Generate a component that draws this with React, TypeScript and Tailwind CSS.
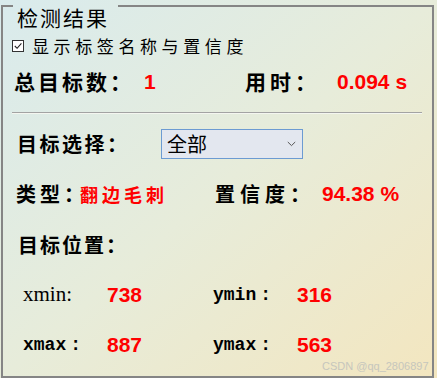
export default function App() {
  return (
    <div className="relative w-[437px] h-[378px] overflow-hidden bg-gradient-to-br from-[#d9ebed] via-[#e7ecda] to-[#f3e6bf] text-black font-['Noto_Sans_CJK_SC',sans-serif]">
      <fieldset className="ml-[1px] w-[433px] h-[378px] border-2 border-[#858585]">
        <legend className="ml-[10px] h-[12px] pl-[4px] pr-[9px]">
          <span className="block mt-[5px] text-[21px] leading-[24px] tracking-[2px] whitespace-nowrap">检测结果</span>
        </legend>

        {/* checkbox */}
        <div className="mt-[22px] h-[24px] flex items-center pl-[9px]">
          <span className="w-[12px] h-[12px] border border-[#333] bg-white flex items-center justify-center">
            <svg width="10" height="10" viewBox="0 0 10 10">
              <path d="M1.8 5 L4.1 7.3 L8.4 2.4" fill="none" stroke="#222" strokeWidth="1.1" />
            </svg>
          </span>
          <span className="ml-[8px] text-[17px] leading-[24px] tracking-[4.6px] whitespace-nowrap">显示标签名称与置信度</span>
        </div>

        {/* totals */}
        <div className="mt-[9px] h-[30px] flex items-center pl-[11px] whitespace-nowrap">
          <span className="w-[130px] text-[21px] font-bold tracking-[3px]">总目标数：</span>
          <span className="w-[101px] text-[21px] font-bold text-[#ff0000] font-['Liberation_Sans',sans-serif]">1</span>
          <span className="w-[92px] text-[21px] font-bold tracking-[4px]">用时：</span>
          <span className="text-[21px] font-bold text-[#ff0000] font-['Liberation_Sans',sans-serif]">0.094 s</span>
        </div>

        <div className="mt-[15px] ml-[9px] w-[410px] h-[2px] border-t border-[#a3a3a3] border-b border-b-[#f4f6f0]" />

        {/* target select */}
        <div className="mt-[15px] h-[30px] flex items-center pl-[14px] whitespace-nowrap">
          <span className="w-[144px] text-[20px] font-bold tracking-[2.5px]">目标选择：</span>
          <div className="w-[142px] h-[30px] border border-[#6c9bd2] bg-[#e3e7ef] flex items-center justify-between pl-[5px] pr-[6px]">
            <span className="text-[20px] leading-[28px]">全部</span>
            <svg width="9" height="6" viewBox="0 0 9 6">
              <path d="M0.8 1 L4.5 4.6 L8.2 1" fill="none" stroke="#555" strokeWidth="1" />
            </svg>
          </div>
        </div>

        {/* type / confidence */}
        <div className="mt-[20px] h-[30px] flex items-center pl-[13px] whitespace-nowrap">
          <span className="w-[64px] text-[20px] font-bold tracking-[4px]">类型：</span>
          <span className="w-[135px] text-[18px] font-bold tracking-[4px] text-[#ff0000]">翻边毛刺</span>
          <span className="w-[107px] text-[20px] font-bold tracking-[5px]">置信度：</span>
          <span className="text-[21px] font-bold text-[#ff0000] font-['Liberation_Sans',sans-serif]">94.38 %</span>
        </div>

        {/* position */}
        <div className="mt-[21px] h-[30px] flex items-center pl-[15px] whitespace-nowrap">
          <span className="text-[20px] font-bold tracking-[2px]">目标位置：</span>
        </div>

        <div className="mt-[20px] h-[30px] flex items-center pl-[20px] whitespace-nowrap">
          <span className="w-[84px] text-[21px] font-['Liberation_Serif',serif]">xmin:</span>
          <span className="w-[106px] text-[21px] font-bold text-[#ff0000] font-['Liberation_Sans',sans-serif]">738</span>
          <span className="w-[84px] text-[18px] font-bold font-['Liberation_Mono',monospace]">
            ymin<span className="ml-[4px]">:</span>
          </span>
          <span className="text-[21px] font-bold text-[#ff0000] font-['Liberation_Sans',sans-serif]">316</span>
        </div>

        <div className="mt-[20px] h-[30px] flex items-center pl-[20px] whitespace-nowrap">
          <span className="w-[84px] text-[18px] font-bold font-['Liberation_Mono',monospace]">
            xmax<span className="ml-[4px]">:</span>
          </span>
          <span className="w-[106px] text-[21px] font-bold text-[#ff0000] font-['Liberation_Sans',sans-serif]">887</span>
          <span className="w-[84px] text-[18px] font-bold font-['Liberation_Mono',monospace]">
            ymax<span className="ml-[4px]">:</span>
          </span>
          <span className="text-[21px] font-bold text-[#ff0000] font-['Liberation_Sans',sans-serif]">563</span>
        </div>
      </fieldset>

      <span className="absolute left-[322px] top-[359px] text-[11px] leading-[14px] text-[#c6c6bd] font-['Liberation_Sans',sans-serif] whitespace-nowrap">
        CSDN @qq_2806897
      </span>
    </div>
  );
}
